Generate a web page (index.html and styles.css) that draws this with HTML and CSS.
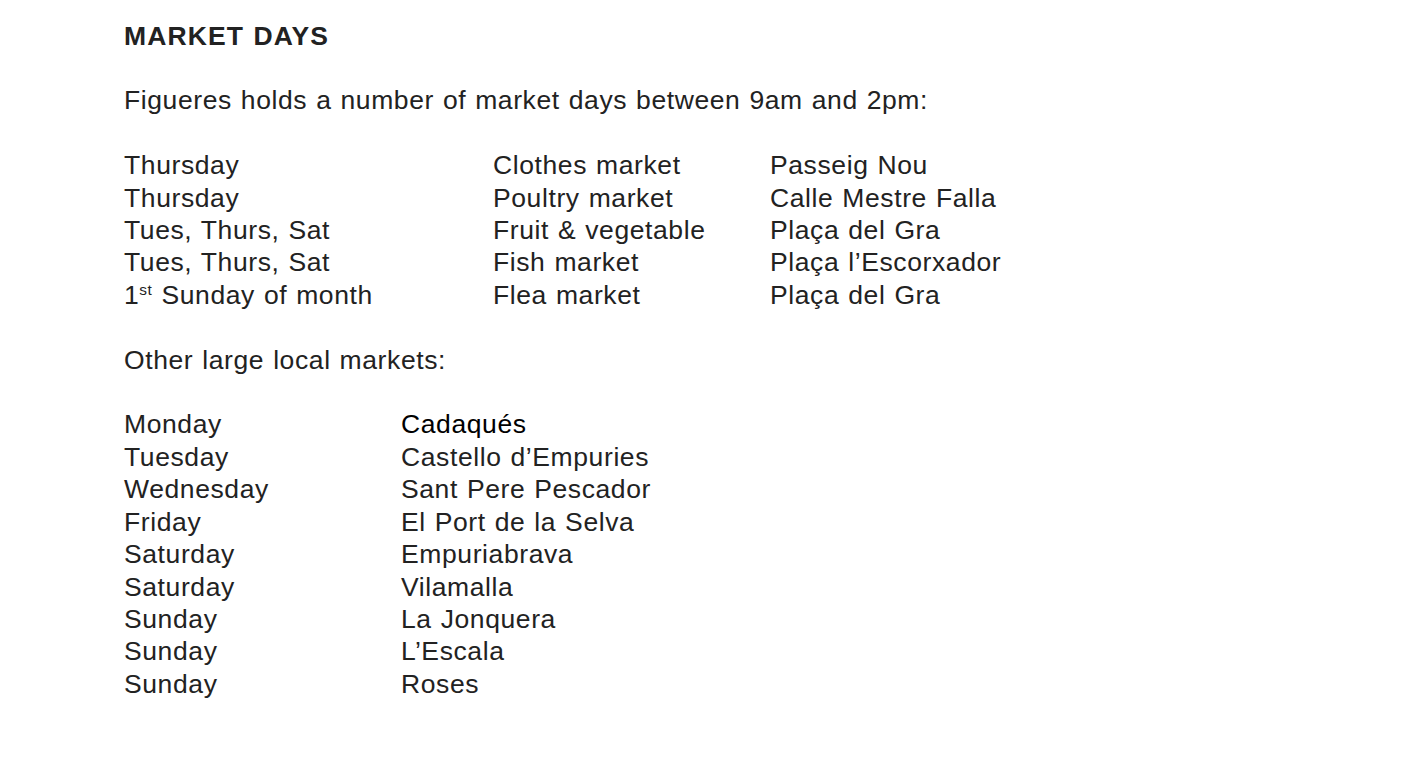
FILE: index.html
```html
<!DOCTYPE html>
<html>
<head>
<meta charset="utf-8">
<link rel="stylesheet" href="styles.css">
</head>
<body>
<div class="page">
  <p class="title">MARKET DAYS</p>
  <p class="blank">&nbsp;</p>
  <p>Figueres holds a number of market days between 9am and 2pm:</p>
  <p class="blank">&nbsp;</p>
  <div class="table t1">
    <span>Thursday</span><span>Clothes market</span><span>Passeig Nou</span>
    <span>Thursday</span><span>Poultry market</span><span>Calle Mestre Falla</span>
    <span>Tues, Thurs, Sat</span><span>Fruit &amp; vegetable</span><span>Plaça del Gra</span>
    <span>Tues, Thurs, Sat</span><span>Fish market</span><span>Plaça l’Escorxador</span>
    <span>1<sup>st</sup> Sunday of month</span><span>Flea market</span><span>Plaça del Gra</span>
  </div>
  <p class="blank">&nbsp;</p>
  <p>Other large local markets:</p>
  <p class="blank">&nbsp;</p>
  <div class="table t2">
    <span>Monday</span><span class="black">Cadaqués</span>
    <span>Tuesday</span><span>Castello d’Empuries</span>
    <span>Wednesday</span><span>Sant Pere Pescador</span>
    <span>Friday</span><span>El Port de la Selva</span>
    <span>Saturday</span><span>Empuriabrava</span>
    <span>Saturday</span><span>Vilamalla</span>
    <span>Sunday</span><span>La Jonquera</span>
    <span>Sunday</span><span>L’Escala</span>
    <span>Sunday</span><span>Roses</span>
  </div>
</div>
</body>
</html>
```
FILE: styles.css
```css
html, body {
  margin: 0;
  padding: 0;
  background: #ffffff;
}
.page {
  padding: 19.6px 0 0 124px;
  font-family: "Liberation Sans", Arial, sans-serif;
  font-size: 26.5px;
  line-height: 32.4px;
  letter-spacing: 0.6px;
  word-spacing: 1px;
  color: #222222;
}
p {
  margin: 0;
}
.title {
  font-weight: bold;
  letter-spacing: 1.1px;
}
.table {
  display: grid;
}
.t1 {
  grid-template-columns: 369px 277px auto;
}
.t2 {
  grid-template-columns: 277px auto;
}
.black {
  color: #000000;
}
sup {
  font-size: 0.58em;
  line-height: 0;
  vertical-align: 0.6em;
}
```
